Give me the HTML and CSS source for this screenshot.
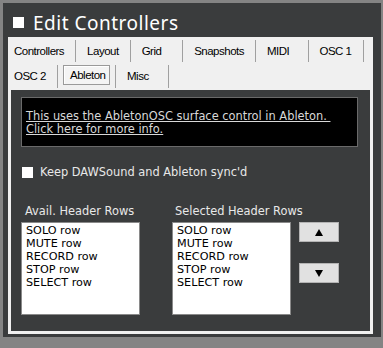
FILE: index.html
```html
<!DOCTYPE html>
<html>
<head>
<meta charset="utf-8">
<link rel="stylesheet" href="styles.css">
</head>
<body>
<div class="window">
  <div class="title"><span class="title-icon"></span><span class="title-text">Edit Controllers</span></div>
  <div class="tabctrl">
    <div class="tabrow row1">
      <div class="tab first">Controllers</div>
      <div class="tab">Layout</div>
      <div class="tab">Grid</div>
      <div class="tab">Snapshots</div>
      <div class="tab">MIDI</div>
      <div class="tab">OSC 1</div>
    </div>
    <div class="tabrow row2">
      <div class="tab first">OSC 2</div>
      <div class="tab active"><span class="active-box">Ableton</span></div>
      <div class="tab">Misc</div>
    </div>
    <div class="panel">
      <div class="info"><span class="info-link">This uses the AbletonOSC surface control in Ableton.&nbsp;<br>Click here for more info.</span></div>
      <div class="sync"><span class="check"></span><span class="sync-label">Keep DAWSound and Ableton sync'd</span></div>
      <div class="lists">
        <div class="col avail">
          <div class="col-label">Avail. Header Rows</div>
          <ul class="listbox">
            <li>SOLO row</li>
            <li>MUTE row</li>
            <li>RECORD row</li>
            <li>STOP row</li>
            <li>SELECT row</li>
          </ul>
        </div>
        <div class="col selected">
          <div class="col-label">Selected Header Rows</div>
          <ul class="listbox">
            <li>SOLO row</li>
            <li>MUTE row</li>
            <li>RECORD row</li>
            <li>STOP row</li>
            <li>SELECT row</li>
          </ul>
        </div>
        <div class="buttons">
          <div class="btn"><svg width="8" height="7" viewBox="0 0 8 7"><polygon points="4,0 8,7 0,7" fill="#000"/></svg></div>
          <div class="btn"><svg width="8" height="7" viewBox="0 0 8 7"><polygon points="0,0 8,0 4,7" fill="#000"/></svg></div>
        </div>
      </div>
    </div>
  </div>
</div>
</body>
</html>
```
FILE: styles.css
```css
* { box-sizing: border-box; }
html, body { margin: 0; padding: 0; }
body {
  width: 383px;
  height: 348px;
  background: #848484;
  overflow: hidden;
  font-family: "DejaVu Sans", Verdana, sans-serif;
}
.window {
  margin: 3px 2px 0 3px;
  height: 334px;
  background: #3a3c3d;
  overflow: hidden;
}
.title {
  height: 34px;
  padding: 5px 0 0 10px;
  display: flex;
  align-items: center;
  color: #fff;
}
.title-icon {
  width: 11px;
  height: 11px;
  background: #fff;
  flex: none;
}
.title-text {
  margin-left: 9px;
  font-family: "Noto Sans", "Open Sans", sans-serif;
  font-size: 19px;
  letter-spacing: 0.5px;
  line-height: 26px;
}
.tabctrl {
  margin-left: 5px;
  width: 365px;
  height: 297px;
  background: #f0f0f0;
  display: flex;
  flex-direction: column;
}
.tabrow {
  display: flex;
  align-items: flex-start;
  font-family: "Liberation Sans", Arial, sans-serif;
  font-size: 11.5px;
  letter-spacing: -0.5px;
  color: #000;
}
.row1 { height: 25px; }
.row2 { height: 28px; }
.tab {
  margin-top: 3px;
  padding: 0 11px;
  min-width: 52.5px;
  border-right: 1px solid #a0a0a0;
  white-space: nowrap;
}
.row1 .tab { height: 22px; line-height: 22px; }
.row2 .tab { height: 23px; line-height: 22px; }
.tab.first { padding-left: 6px; min-width: 0; }
.tab.active { padding: 0 5px; }
.active-box {
  display: block;
  width: 47px;
  height: 20px;
  line-height: 19px;
  padding-left: 6px;
  border: 1px solid #9a9a9a;
  box-shadow: inset 1px 1px 0 #fff;
  background: #f4f4f4;
}
.panel {
  margin: 0 3px 3px 3px;
  flex: 1;
  background: #3a3c3d;
  padding-top: 7px;
  color: #e8e8e8;
  font-size: 11.4px;
}
.info {
  margin: 0 12px 0 10px;
  height: 50px;
  background: #000;
  border: 1px solid #6a6a6a;
  padding: 12px 0 0 4px;
  line-height: 13px;
}
.info-link {
  color: #d8d8d8;
  text-decoration: underline;
}
.sync {
  margin: 19px 0 0 11px;
  display: flex;
  align-items: center;
  height: 13px;
}
.check {
  width: 11px;
  height: 11px;
  background: #fff;
  flex: none;
}
.sync-label { margin-left: 7px; line-height: 13px; }
.lists {
  margin-top: 25px;
  display: flex;
  align-items: flex-start;
}
.col { width: 119px; }
.avail { margin-left: 10px; }
.selected { margin-left: 32px; }
.col-label {
  line-height: 14px;
  height: 14px;
  padding-left: 4px;
  white-space: nowrap;
}
.selected .col-label { padding-left: 3px; }
.listbox {
  list-style: none;
  margin: 4px 0 0 0;
  padding: 1px 0 0 4px;
  width: 119px;
  height: 93px;
  background: #fff;
  border: 1px solid #8a8a8a;
  color: #000;
  font-size: 11.2px;
}
.listbox li { line-height: 13px; height: 13px; white-space: nowrap; }
.buttons {
  margin-left: 8px;
  margin-top: 18px;
  display: flex;
  flex-direction: column;
  gap: 21px;
}
.btn {
  width: 40px;
  height: 20px;
  background: #e1e1e1;
  border: 1px solid #b4b4b4;
  display: flex;
  align-items: center;
  justify-content: center;
}
.btn svg { display: block; }
```
